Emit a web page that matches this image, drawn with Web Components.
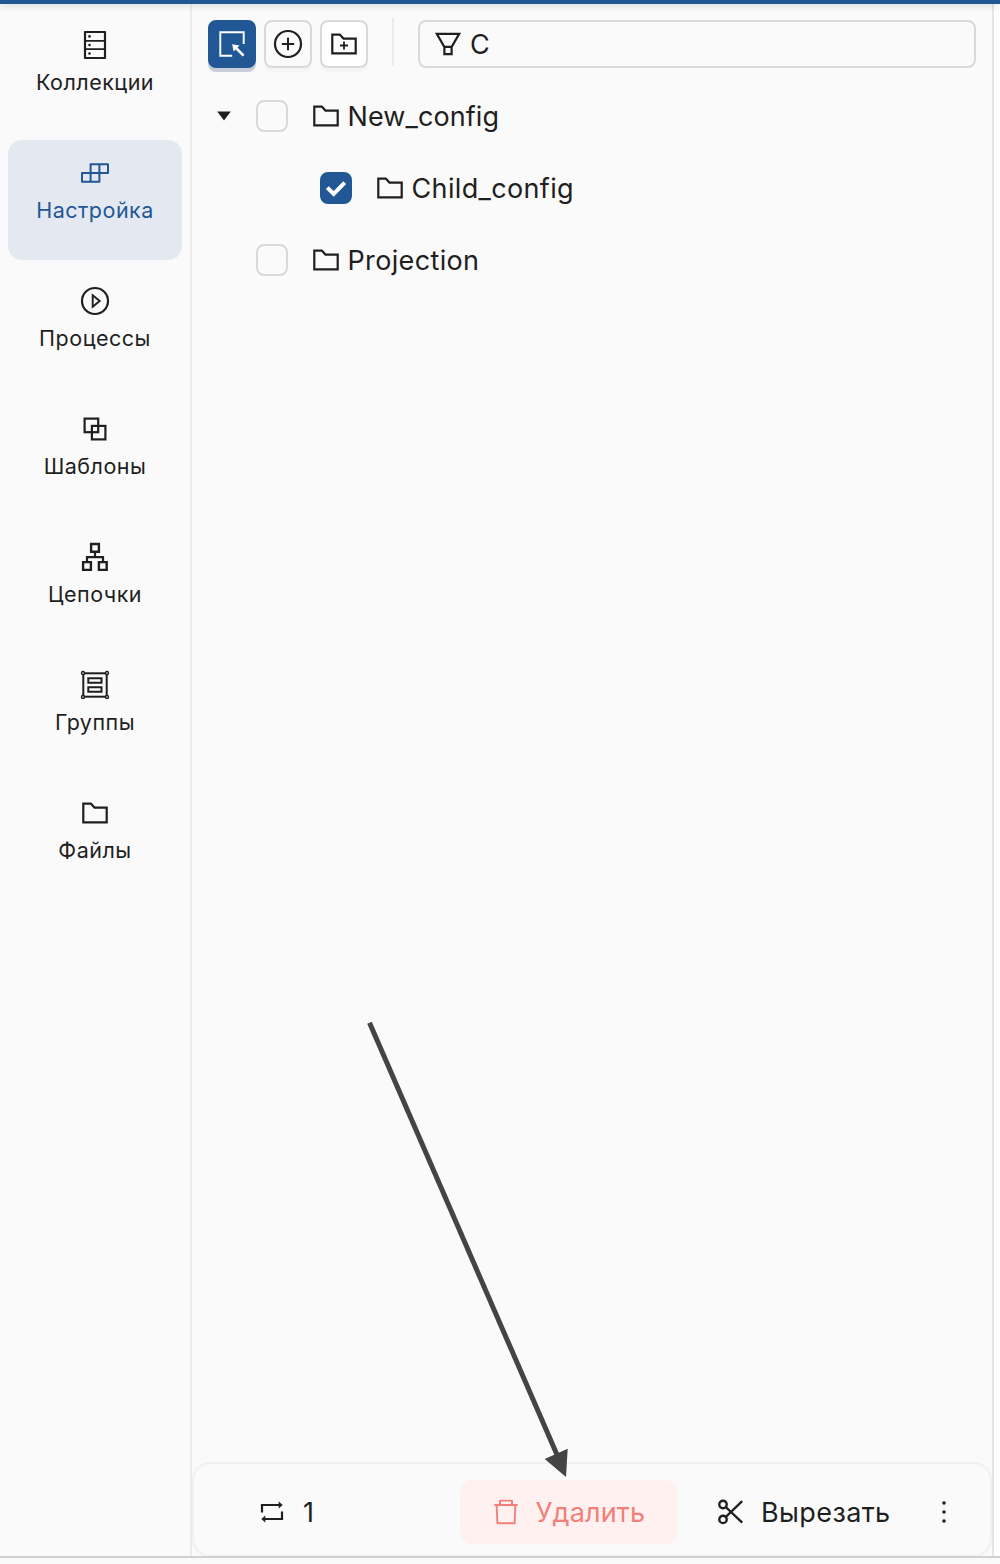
<!DOCTYPE html>
<html lang="ru">
<head>
<meta charset="utf-8">
<title>Настройка</title>
<style>
html,body{margin:0;height:100%;background:#fafafa}
body{font-family:Inter,"Noto Sans",sans-serif;color:#1f1f1f}
</style>
</head>
<body>
<app-shell>
  <side-nav slot="nav">
    <nav-item icon="collections">Коллекции</nav-item>
    <nav-item icon="settings" active>Настройка</nav-item>
    <nav-item icon="processes">Процессы</nav-item>
    <nav-item icon="templates">Шаблоны</nav-item>
    <nav-item icon="chains">Цепочки</nav-item>
    <nav-item icon="groups">Группы</nav-item>
    <nav-item icon="folder">Файлы</nav-item>
  </side-nav>
  <tool-bar>
    <tool-button icon="select" primary></tool-button>
    <tool-button icon="plus"></tool-button>
    <tool-button icon="folderplus" solid></tool-button>
    <filter-input slot="filter">C</filter-input>
  </tool-bar>
  <config-tree>
    <tree-row expanded style="letter-spacing:.1px">New_config</tree-row>
    <tree-row level="1" checked>Child_config</tree-row>
    <tree-row>Projection</tree-row>
  </config-tree>
  <action-bar slot="footer">
    <bar-action icon="repeat" kind="count">1</bar-action>
    <bar-action icon="trash" kind="danger">Удалить</bar-action>
    <bar-action icon="scissors" kind="cut">Вырезать</bar-action>
    <bar-action icon="more" kind="more"></bar-action>
  </action-bar>
  <pointer-arrow slot="overlay"></pointer-arrow>
</app-shell>
<script>
const FOLDER = '<path d="M4.3 6.6H11.8L15.5 10.6H27.7V25.4H4.3Z"/>';
const ICONS = {
  collections: '<rect x="6" y="3" width="20" height="26" stroke-linejoin="round"/><path d="M6 11.8H26M6 20.2H26" stroke-width="1.8"/><g fill="currentColor" stroke="none"><circle cx="10.5" cy="7.4" r="1.3"/><circle cx="10.5" cy="16" r="1.3"/><circle cx="10.5" cy="24.5" r="1.3"/></g>',
  settings: '<path stroke-width="2" stroke-linejoin="round" d="M11.6 7.2H29V15.9H11.6ZM3 15.9H20.4V24.7H3ZM11.6 15.9V24.7M20.4 7.2V15.9"/>',
  processes: '<circle cx="16" cy="16" r="13"/><path stroke-width="1.9" d="M13.7 10.3L20.7 16L13.7 21.7Z"/>',
  templates: '<rect x="5.6" y="5.6" width="13.6" height="13.6"/><rect x="12.9" y="12.9" width="13.5" height="13.5"/>',
  chains: '<path stroke-width="2.4" d="M12.1 3H19.9V10.8H12.1ZM4.1 21.1H11.9V28.9H4.1ZM19.9 21.1H27.7V28.9H19.9Z"/><path d="M16 10.8V16M8 21V16.2H24V21"/>',
  groups: '<rect x="4.3" y="4.3" width="23.4" height="23.4" stroke-width="2"/><path d="M9.3 9.2H22.5V13.7H9.3ZM9.3 18.2H22.5V22.7H9.3Z" stroke-width="2"/><g fill="#fafafa" stroke-width="1.4"><circle cx="4" cy="4" r="1.5"/><circle cx="28" cy="4" r="1.5"/><circle cx="4" cy="28" r="1.5"/><circle cx="28" cy="28" r="1.5"/></g>',
  folder: FOLDER,
  folderplus: FOLDER + '<path d="M12 17.5H20M16 13.5V21.5" stroke-width="1.8"/>',
  select: '<path d="M27.7 16V4.3H4.3V27.7H16.2" stroke-width="1.9"/><path d="M19 19L27.6 27.6" stroke-width="2.6"/><path d="M16.2 16.2L23.5 17.6L17.6 23.5Z" fill="currentColor" stroke="none"/>',
  plus: '<circle cx="16" cy="16" r="13"/><path d="M9.8 16H22.2M16 9.8V22.2" stroke-width="2"/>',
  funnel: '<path d="M4.8 5.9H27.2L19.7 18.8H12.3ZM12.4 18.8V26.1H19.6V18.8"/>',
  repeat: '<path d="M6 16.6V9H24M26 15.6V23H8"/><path d="M22.7 5.6L26.7 9L22.7 12.4ZM9.3 19.6L5.3 23L9.3 26.4Z" fill="currentColor" stroke="none"/>',
  trash: '<path stroke-width="1.9" d="M4.3 9H27.7M10 9V4.6H22V9M6.6 9L7.4 27.3H24.6L25.4 9" stroke-linejoin="round"/>',
  scissors: '<circle cx="8" cy="8.5" r="3.7" stroke-width="2.4"/><circle cx="8" cy="23.4" r="3.7" stroke-width="2.4"/><path d="M10.7 11L27.2 26.6M10.7 21L27.2 5.2" stroke-width="2.4"/>',
  more: '<g fill="currentColor" stroke="none"><circle cx="16" cy="7" r="1.8"/><circle cx="16" cy="16" r="1.8"/><circle cx="16" cy="25" r="1.8"/></g>'
};
const svg = name => `<svg width="32" height="32" viewBox="0 0 32 32" fill="none" stroke="currentColor" stroke-width="2.2">${ICONS[name]}</svg>`;
const base = ':host,*{box-sizing:border-box}svg{display:block;flex:none}';
function define(tag, css, html) {
  customElements.define(tag, class extends HTMLElement {
    constructor() {
      super();
      this.attachShadow({mode: 'open'}).innerHTML = `<style>${base}${css}</style>` + html(this);
    }
  });
}
define('app-shell', `
  :host{display:flex;flex-direction:column;height:1564px;width:1000px;position:relative;overflow:hidden;background:#fafafa}
  header{flex:none;height:4px;background:#225796;box-shadow:0 2px 6px rgba(0,0,0,.14);z-index:1}
  .body{display:flex;height:1552px;flex:none}
  main{width:802px;flex:none;display:flex;flex-direction:column;border-left:2px solid #ebebeb;overflow:hidden}
  .content{flex:1}
  aside{flex:1;background:#fff;border-left:2px solid #e6e6e6}
  footer{height:2px;background:#d0d0d0;flex:none}`,
  () => `<header></header><div class="body"><slot name="nav"></slot><main><div class="content"><slot></slot></div><slot name="footer"></slot></main><aside></aside></div><footer></footer><slot name="overlay"></slot>`);
define('side-nav', `:host{display:flex;flex-direction:column;gap:8px;width:190px;padding:8px;flex:none}`, () => '<slot></slot>');
define('nav-item', `
  :host{display:flex;flex-direction:column;align-items:center;height:120px;padding-top:17px;border-radius:14px;font-size:21.5px;line-height:28px;letter-spacing:.5px}
  :host([active]){background:#e4e9f1;color:#225796}
  span{margin-top:7px;white-space:nowrap}`,
  el => svg(el.getAttribute('icon')) + '<span><slot></slot></span>');
define('tool-bar', `
  :host{display:flex;align-items:center;gap:8px;padding:16px 16px 0}
  i{width:2px;height:48px;background:#ebebeb;margin:-4px 16px 0}`,
  () => '<slot></slot><i></i><slot name="filter"></slot>');
define('tool-button', `
  :host{display:flex;align-items:center;justify-content:center;flex:none;width:48px;height:48px;border:2px solid #d9d9d9;border-radius:8px;box-shadow:0 4px 0 rgba(0,0,0,.02)}
  :host([solid]){background:#fff}
  :host([primary]){background:#225796;border-color:#225796;color:#fff;box-shadow:0 4px 0 #c5ced7}`,
  el => svg(el.getAttribute('icon')));
define('filter-input', `
  :host{display:flex;align-items:center;flex:1;height:48px;border:2px solid #d9d9d9;border-radius:8px;padding-left:12px;font-size:27px;gap:6px}
  span{padding-top:1px}`,
  () => svg('funnel') + '<span><slot></slot></span>');
define('config-tree', `:host{display:flex;flex-direction:column;padding:12px 16px}`, () => '<slot></slot>');
define('tree-row', `
  :host{display:flex;align-items:center;height:72px;font-size:27px;letter-spacing:.35px}
  :host([level="1"]){padding-left:64px}
  .caret{width:32px;height:32px;margin-right:16px}
  .box{width:32px;height:32px;border:2px solid #d9d9d9;border-radius:8px;margin-right:22px;flex:none}
  :host([checked]) .box{background:#225796;border-color:#225796}
  .box svg{margin:-2px}
  span{margin-left:5.5px;padding-top:1px}`,
  el => `<div class="caret">${el.hasAttribute('expanded') ? '<svg width="32" height="32"><path d="M9.2 11.6H22.8L16 20.6Z" fill="currentColor"/></svg>' : ''}</div><div class="box">${el.hasAttribute('checked') ? '<svg width="32" height="32" fill="none" stroke="#fff" stroke-width="4"><path d="M7.3 15.6L13.7 22L24.7 10.6"/></svg>' : ''}</div>${svg('folder')}<span><slot></slot></span>`);
define('action-bar', `
  :host{display:flex;align-items:center;flex:none;height:95px;margin-bottom:-1px;border:2px solid #f0f0f0;border-radius:18px;padding:0 30px 0 62px;font-size:27px}`,
  () => '<slot></slot>');
define('bar-action', `
  :host{display:flex;align-items:center;flex:none;height:64px;border-radius:12px;gap:14px;letter-spacing:.4px;white-space:nowrap;margin-top:4px}
  :host([kind="count"]){width:204px;gap:15px}
  :host([kind="danger"]){width:217px;padding-left:30px;gap:13.5px;letter-spacing:.15px;background:#fff1f0;color:#f27f79}
  :host([kind="cut"]){margin-left:38px;width:213px}
  span{padding-top:1px}`,
  el => svg(el.getAttribute('icon')) + '<span><slot></slot></span>');
define('pointer-arrow', `:host{display:block;position:absolute;left:340px;top:1000px;pointer-events:none}`,
  () => '<svg width="250" height="490"><path d="M29.5 22.8L218 457" stroke="#444" stroke-width="5"/><path d="M226 477L204.7 459L227.7 448.7Z" fill="#444"/></svg>');
</script>
</body>
</html>
